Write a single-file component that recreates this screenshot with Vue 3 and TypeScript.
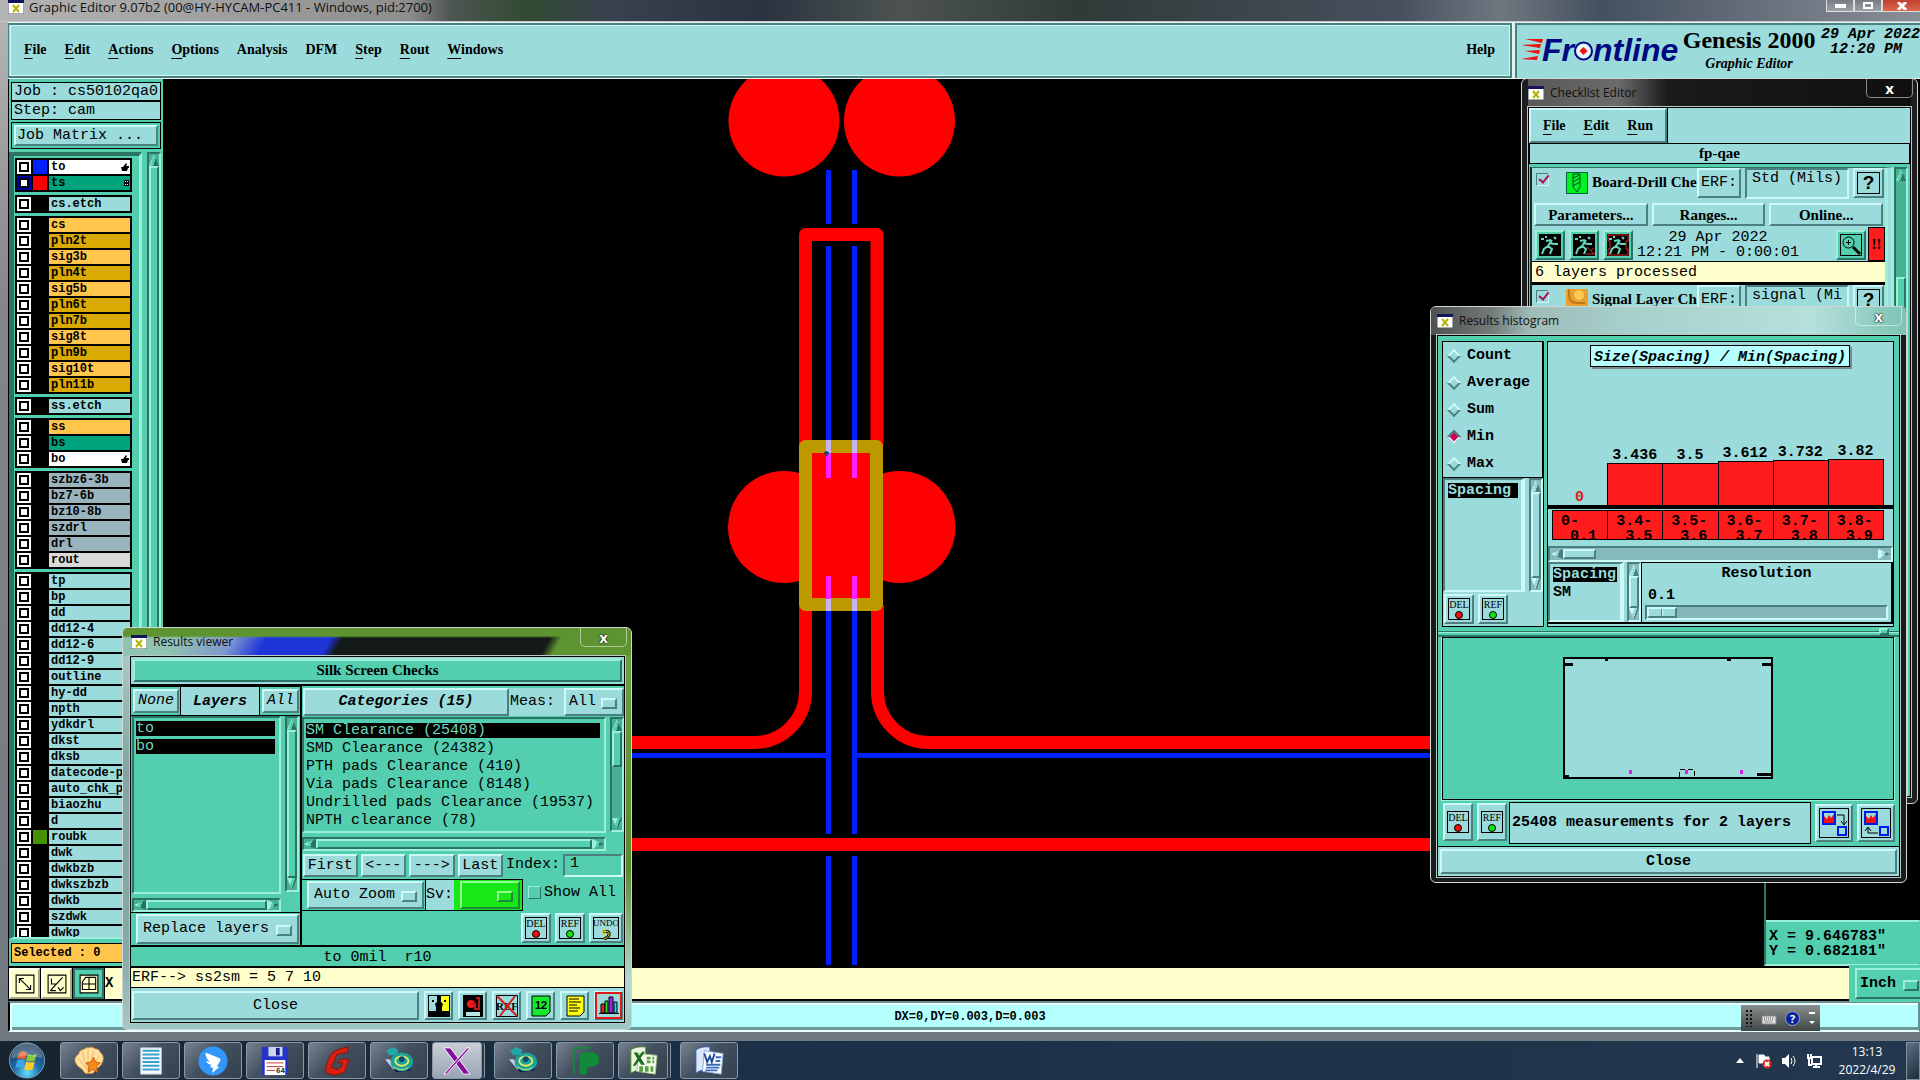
<script setup lang="ts">
import { ref } from 'vue'

interface Layer {
  name: string
  kind: string
  swatch?: string
  mark?: 'hand' | 'grid'
  active?: boolean
}

const menus = [
  ['F', 'ile'], ['E', 'dit'], ['A', 'ctions'], ['O', 'ptions'], ['', 'Analysis'],
  ['', 'DFM'], ['S', 'tep'], ['R', 'out'], ['W', 'indows'],
]

const plain = (names: string[], kind: string): Layer[] => names.map((name) => ({ name, kind }))

const groups: Layer[][] = [
  [
    { name: 'to', kind: 'silk', swatch: '#0020ff', mark: 'hand' },
    { name: 'ts', kind: 'mask', swatch: '#ff0000', mark: 'grid', active: true },
  ],
  plain(['cs.etch'], 'misc'),
  ['cs', 'pln2t', 'sig3b', 'pln4t', 'sig5b', 'pln6t', 'pln7b', 'sig8t', 'pln9b', 'sig10t', 'pln11b'].map((name) => ({
    name,
    kind: name.startsWith('pln') ? 'plane' : 'signal',
  })),
  plain(['ss.etch'], 'misc'),
  [
    { name: 'ss', kind: 'signal' },
    { name: 'bs', kind: 'mask' },
    { name: 'bo', kind: 'silk', mark: 'hand' },
  ],
  [...plain(['szbz6-3b', 'bz7-6b', 'bz10-8b', 'szdrl', 'drl'], 'drill'), { name: 'rout', kind: 'rout' }],
  [
    ...plain(
      ['tp', 'bp', 'dd', 'dd12-4', 'dd12-6', 'dd12-9', 'outline', 'hy-dd', 'npth', 'ydkdrl', 'dkst', 'dksb',
        'datecode-pt', 'auto_chk_pn', 'biaozhu', 'd'],
      'misc',
    ),
    { name: 'roubk', kind: 'misc', swatch: '#459200' },
    ...plain(['dwk', 'dwkbzb', 'dwkszbzb', 'dwkb', 'szdwk', 'dwkp'], 'misc'),
  ],
]

const categories = [
  'SM Clearance (25408)',
  'SMD Clearance (24382)',
  'PTH pads Clearance (410)',
  'Via pads Clearance (8148)',
  'Undrilled pads Clearance (19537)',
  'NPTH clearance (78)',
]
const category = ref(0)

const stats = ['Count', 'Average', 'Sum', 'Min', 'Max']
const stat = ref('Min')

const bars = [
  { value: '0', height: 0, from: '0', to: '0.1' },
  { value: '3.436', height: 42, from: '3.4', to: '3.5' },
  { value: '3.5', height: 42, from: '3.5', to: '3.6' },
  { value: '3.612', height: 44, from: '3.6', to: '3.7' },
  { value: '3.732', height: 45, from: '3.7', to: '3.8' },
  { value: '3.82', height: 46, from: '3.8', to: '3.9' },
]

const index = ref('1')
const showAll = ref(false)
const resolution = ref(0)
const drillChecked = ref(true)
const signalChecked = ref(true)
const drillErf = ref('Std (Mils)')
const signalErf = ref('signal (Mi')
</script>

<template>
  <div class="desktop">
    <section class="editor">
      <header class="titlebar">
        <svg class="xicon" viewBox="0 0 16 14"><rect width="16" height="14" fill="#fff" stroke="#555" /><rect width="16" height="3" fill="#14145a" /><path d="M5 5l6 7M11 5l-6 7" stroke="#b8b400" stroke-width="2" /></svg>
        <span>Graphic Editor 9.07b2 (00@HY-HYCAM-PC411 - Windows, pid:2700)</span>
        <div class="caption">
          <button aria-label="Minimize"><i class="min"></i></button>
          <button aria-label="Restore"><i class="max"></i></button>
          <button class="quit" aria-label="Close window"><svg width="12" height="8" viewBox="0 0 12 8"><path d="M2 0l8 8M10 0L2 8" stroke="#fff" stroke-width="3" /></svg></button>
        </div>
      </header>

      <div class="top">
        <nav class="menubar">
          <a v-for="m in menus" :key="m[1]" href="#"><u>{{ m[0] }}</u>{{ m[1] }}</a>
          <a class="help" href="#">Help</a>
        </nav>
        <div class="brand">
          <div class="logo">
            <svg width="22" height="26" viewBox="0 0 22 26" fill="#f01010"><path d="M4 2h18l-1 4zM0 8l20-1-1 4zM4 14l15-1-1 4zM0 22l17-3-1 4z" /></svg>
            <span>Fr</span>
            <svg width="19" height="22" viewBox="0 0 19 22"><circle cx="9.500" cy="12" r="8.500" fill="#e4f6fa" stroke="#000a80" stroke-width="2" /><path d="M9.500 8l4 4-4 4-4-4z" fill="#f01010" /></svg>
            <span>ntline</span>
          </div>
          <div class="product">
            <strong>Genesis 2000</strong>
            <em>Graphic Editor</em>
          </div>
          <div class="clock">29 Apr 2022<br />&nbsp;12:20 PM</div>
        </div>
      </div>

      <div class="body">
        <aside class="sidebar">
          <div class="field">Job : cs50102qa0</div>
          <div class="field">Step: cam</div>
          <div class="matrix"><button class="bevel">Job Matrix ...</button></div>
          <div class="layers">
            <div class="frame">
              <div class="list">
                <div v-for="(g, gi) in groups" :key="gi" class="group">
                  <label v-for="l in g" :key="l.name" class="layer">
                    <input type="checkbox" :class="{ active: l.active }" />
                    <i class="swatch" :style="{ background: l.swatch }"></i>
                    <span :class="['name', l.kind]">{{ l.name }}
                      <svg v-if="l.mark === 'hand'" width="8" height="8" viewBox="0 0 8 8"><path d="M0 4h2l3-4 1 1-1 2h3v2H7l-1 3H1z" /></svg>
                      <svg v-if="l.mark === 'grid'" width="5" height="6" viewBox="0 0 5 6"><path d="M0 0h5v6H0z" /><path d="M1 1h1v1H1zM3 1h1v1H3zM1 4h1v1H1zM3 4h1v1H3z" fill="#fff" /></svg>
                    </span>
                  </label>
                </div>
              </div>
            </div>
            <div class="sb v"><i class="up"></i><i class="thumb"></i></div>
          </div>
          <div class="selected">Selected : 0</div>
        </aside>

        <div class="canvas">
          <svg class="artwork" fill="none">
            <g transform="translate(-163 -79)">
              <g fill="#ff0000">
                <circle cx="784" cy="121" r="55.5" /><circle cx="899.5" cy="121" r="55.5" />
                <circle cx="784" cy="527" r="56" /><circle cx="899.5" cy="527" r="56" />
                <rect x="812" y="453" width="59" height="146" />
              </g>
              <path d="M805.5 446V234.500H877V446" stroke="#ff0000" stroke-width="13" stroke-linejoin="round" />
              <path d="M805.500 605V692A51 51 0 0 1 754 742.500H163M877.500 605V692A51 51 0 0 0 928 742.500H1500M163 844.500H1500" stroke="#ff0000" stroke-width="13" />
              <path d="M828.500 170V224M854.500 170V224M828.500 246V440M854.500 246V440M828.500 611V834M854.500 611V834M828.500 856V965M854.500 856V965M163 755.500H831M852 755.500H1500" stroke="#0020ff" stroke-width="5" />
              <rect x="805.5" y="446.5" width="71" height="158" stroke="#bd9900" stroke-width="13" stroke-linejoin="round" />
              <path d="M828.500 440V453M854.500 440V453M828.500 599V611M854.500 599V611" stroke="#c8b4ec" stroke-width="5" />
              <path d="M828.500 453V478M854.500 453V478M828.500 576V599M854.500 576V599" stroke="#ff20ff" stroke-width="5" />
              <path d="M824 453h5M826.500 451v5" stroke="#1d4a55" stroke-width="2" />
            </g>
          </svg>
          <div class="coords">X = 9.646783"<br />Y = 0.682181"</div>
        </div>
      </div>

      <div class="command">
        <button class="tool" aria-label="Snap"><svg viewBox="0 0 18 18"><path d="M1 1h16v16H1zM4 4l10 10M4 8V4h4M14 10v4h-4" /></svg></button>
        <button class="tool" aria-label="Angle"><svg viewBox="0 0 18 18"><path d="M1 1h16v16H1zM3 15L14 3M4 4v5h4M3 15h5M10 12l2 3 3-3" /></svg></button>
        <button class="tool on" aria-label="Grid"><svg viewBox="0 0 18 18"><path d="M1 1h16v16H1zM3 7l3-4h9v11H3zM9 3v11M3 9h12" /></svg></button>
        <label class="entry" for="cmd">X Y</label>
        <input id="cmd" type="text" />
        <label class="opt green unit"><select aria-label="Units"><option>Inch</option></select></label>
      </div>
      <div class="status"><span>DX=0,DY=0.003,D=0.003</span></div>
      <div class="langbar">
        <i class="grip"></i>
        <svg width="16" height="14" viewBox="0 0 16 14"><path d="M1 5h14v8H1z" fill="#ddd" stroke="#888" /><path d="M3 7h10M3 9h10M4 11h8" stroke="#666" stroke-dasharray="1 1" /><path d="M5 4c2-3 4 0 7-3" stroke="#888" fill="none" /></svg>
        <span class="q">?</span>
        <svg width="8" height="14" viewBox="0 0 8 14" fill="#fff"><path d="M1 1h6v2H1zM1 10h6l-3 3z" /></svg>
      </div>
    </section>

    <footer class="taskbar">
      <button class="orb" aria-label="Start">
        <svg viewBox="0 0 38 38">
          <defs><radialGradient id="orb" cx=".5" cy=".85" r=".8"><stop offset="0" stop-color="#5fe3ff" /><stop offset=".45" stop-color="#1f6fa8" /><stop offset="1" stop-color="#1b3350" /></radialGradient></defs>
          <circle cx="19" cy="19" r="18" fill="url(#orb)" stroke="#7da6c4" />
          <path d="M11 11q4-3 8 0l-2 7q-4-2-8 0z" fill="#f0602c" /><path d="M20 12q4 3 9 0l-2 7q-5 2-9 0z" fill="#8cc63a" /><path d="M9 19q4-2 8 0l-2 8q-4-3-8 0z" fill="#3fa4e8" /><path d="M18 20q4 2 9 0l-2 8q-5 2-9 0z" fill="#fcc82c" />
          <path d="M3 17a16 16 0 0 1 32 0q-16-6-32 0z" fill="#fff" opacity=".25" />
        </svg>
      </button>
      <button class="task" aria-label="Shell"><svg viewBox="0 0 32 32"><path d="M12 29l-3-4Q1 20 1 14q1-4 4-5 1-5 5-5 3-3 6-2 3-2 6 1 5 0 6 4 4 3 3 8-1 6-8 10l-3 4z" fill="#ffe2a0" stroke="#e8a040" /><path d="M14 26L4 12M14 26L9 6M15 26V4M16 26l5-21M18 26l9-16" stroke="#f0b860" fill="none" /><path d="M21 12l2 5 5 1-4 4 1 6-5-3-5 3 1-6-3-4 5-1z" fill="#f58a1c" stroke="#c55a10" /></svg></button>
      <button class="task" aria-label="Notes"><svg viewBox="0 0 32 32"><path d="M5 2h22v28H5z" fill="#f6fbff" stroke="#bcd" /><path d="M7 5h18M7 9h18M7 13h18M7 17h18M7 21h18M7 25h18" stroke="#3aa0c8" stroke-width="2" /></svg></button>
      <button class="task" aria-label="Messenger"><svg viewBox="0 0 32 32"><circle cx="16" cy="16" r="15.500" fill="#3296fa" /><path d="M8 7l15 6q2 1 0 4l-3 5h3l-8 7 1-6h-3l1-3q-5-1-5-4l4 1q-5-3-5-10z" fill="#fff" /></svg></button>
      <button class="task" aria-label="Commander"><svg viewBox="0 0 32 32"><path d="M2 1h28v30H2z" fill="#2434c8" /><path d="M9 1h15v10H9z" fill="#cfd6ea" /><path d="M17 2h4v8h-4z" fill="#14208a" /><path d="M5 15h22v16H5z" fill="#fff" /><path d="M7 18h18M7 22h18M7 26h9" stroke="#c03030" /><text x="17" y="29" font-size="8" font-family="Liberation Mono, monospace" fill="#222">64</text></svg></button>
      <button class="task" aria-label="CAM"><svg viewBox="0 0 32 32"><path d="M28 1l-1 6-11 2-6 14 6 2 5-3 1-4h-5l2-4h10l-5 14-9 3q-9 0-11-4 0-10 7-20l8-4z" fill="#d91f10" stroke="#8c1208" /></svg></button>
      <button class="task" aria-label="Genesis"><svg viewBox="0 0 32 32"><path d="M2 5l7-4 6 3-1 5-8 1z" fill="#21a8a4" /><path d="M1 14l12 14 15-2 2-8z" fill="#181840" /><path d="M1 14l9 11 4-2-8-9z" fill="#c8d0e8" /><ellipse cx="19" cy="17" rx="12" ry="10" fill="#17a29c" /><ellipse cx="19" cy="16" rx="7" ry="5" fill="none" stroke="#e8e860" stroke-width="2" /><path d="M10 22q8 6 16 1" fill="none" stroke="#e8e860" /><circle cx="19" cy="14" r="3" fill="#0d4a70" /></svg></button>
      <button class="task stack lit" aria-label="X server"><svg viewBox="0 0 32 32"><path d="M2 2h7l21 28h-7z" fill="#83109a" stroke="#fff" /><path d="M27 2h3L5 30H2z" fill="#83109a" stroke="#fff" /></svg></button>
      <button class="task" aria-label="Genesis"><svg viewBox="0 0 32 32"><path d="M2 5l7-4 6 3-1 5-8 1z" fill="#21a8a4" /><path d="M1 14l12 14 15-2 2-8z" fill="#181840" /><path d="M1 14l9 11 4-2-8-9z" fill="#c8d0e8" /><ellipse cx="19" cy="17" rx="12" ry="10" fill="#17a29c" /><ellipse cx="19" cy="16" rx="7" ry="5" fill="none" stroke="#e8e860" stroke-width="2" /><path d="M10 22q8 6 16 1" fill="none" stroke="#e8e860" /><circle cx="19" cy="14" r="3" fill="#0d4a70" /></svg></button>
      <button class="task" aria-label="Planner"><svg viewBox="0 0 32 32"><path d="M4 30V2h18" stroke="#128a38" stroke-width="2" fill="none" /><path d="M10 30V12q0-6 8-6h5q8 2 8 8 0 8-9 8h-4v8z" fill="#128a38" /></svg></button>
      <button class="task stack" aria-label="Excel"><svg viewBox="0 0 32 32"><path d="M3 4q6-4 16-3v25q-8-2-16 3z" fill="#e8f4dc" stroke="#3a8a28" /><path d="M12 8l19 2-2 20-20-3z" fill="#f6fbf0" stroke="#9ac080" /><path d="M20 13h8M20 17h8M12 23h15M12 26h15" stroke="#58a03c" stroke-width="3" stroke-dasharray="4 2" /><path d="M6 7h4l8 13h-4zM15 6h3L8 21H5z" fill="#1b6c1b" /></svg></button>
      <button class="task" aria-label="Word"><svg viewBox="0 0 32 32"><path d="M2 4q6-4 15-3v25q-8-2-15 3z" fill="#dce8f8" stroke="#2a5cae" /><path d="M11 5l20 3-2 22-20-3z" fill="#fafcff" stroke="#8aa8d8" /><path d="M23 12h6M23 16h5M13 20h15M13 23h14M12 26h13" stroke="#3c6cba" stroke-width="2" /><path d="M11 8l3 9 3-6 2 6 3-9" fill="none" stroke="#1c4a9c" stroke-width="2" /></svg></button>
      <div class="tray">
        <svg width="8" height="5" viewBox="0 0 8 5"><path d="M4 0l4 5H0z" fill="#fff" /></svg>
        <svg class="flag" width="16" height="16" viewBox="0 0 16 16"><path d="M1 1v14M3 2h5l1 2h4v6H3z" fill="#fff" stroke="#fff" /><circle cx="11" cy="11" r="4.500" fill="#e02818" /><path d="M9 9l4 4M13 9l-4 4" stroke="#fff" stroke-width="2" /></svg>
        <svg width="16" height="16" viewBox="0 0 16 16"><path d="M1 5h3l4-4v14l-4-4H1z" fill="#fff" /><path d="M10 5q2 3 0 6M12 3q4 5 0 10" fill="none" stroke="#fff" /></svg>
        <svg width="16" height="16" viewBox="0 0 16 16"><path d="M6 4h9v7H6zM10 11v3M7 14h7M2 1v4h3V1M3 5v7h3" fill="none" stroke="#fff" stroke-width="2" /></svg>
        <div class="time">13:13<br />2022/4/29</div>
        <button class="peek" aria-label="Show desktop"></button>
      </div>
    </footer>

    <!-- Checklist -->
    <section class="win checklist">
      <header>
        <svg class="xicon" viewBox="0 0 16 14"><rect width="16" height="14" fill="#fff" stroke="#555" /><rect width="16" height="3" fill="#14145a" /><path d="M5 5l6 7M11 5l-6 7" stroke="#b8b400" stroke-width="2" /></svg>
        <span>Checklist Editor</span><button class="x" aria-label="Close window">x</button>
      </header>
      <div class="pane">
        <div class="cmenu"><nav class="bevel"><a href="#"><u>F</u>ile</a><a href="#"><u>E</u>dit</a><a href="#"><u>R</u>un</a></nav></div>
        <h2>fp-qae</h2>
        <div class="crow">
          <div class="items">
            <article>
              <div class="chead">
                <input v-model="drillChecked" type="checkbox" aria-label="Board-Drill Checks" />
                <svg width="22" height="22" viewBox="0 0 22 22"><rect x=".5" y=".5" width="21" height="21" fill="#00f420" stroke="#063" /><path d="M7 2h7v13l-3 5-4-5zM7 6l7-3M7 10l7-4M7 14l7-4" fill="none" stroke="#043" /></svg>
                <span class="cname">Board-Drill Che</span>
                <button class="bevel erf">ERF:</button>
                <input v-model="drillErf" class="sunk" type="text" aria-label="ERF model" />
                <button class="bevel qm"><b>?</b></button>
              </div>
              <div class="cbtns"><button class="bevel">Parameters...</button><button class="bevel">Ranges...</button><button class="bevel">Online...</button></div>
              <div class="crun">
                <button v-for="n in 3" :key="n" class="bevel green run" aria-label="Run">
                  <svg viewBox="0 0 22 22"><rect width="22" height="22" fill="#000" /><path d="M15 3l2 2M13 6l-4 6 4 3-2 5M10 9l5 1 4 0M9 12l-4 3-2 5M12 6L7 7M2 5h3M6 3h2" stroke="#66d8bc" stroke-width="2" fill="none" /><path v-if="n === 2" d="M14 13l7 7M21 14l-4 3M13 20h9" stroke="#e02020" /><path v-if="n === 3" d="M1 1h20v6h-2v8h2v6H1v-6h2V7H1z" stroke="#e02020" fill="none" /></svg>
                </button>
                <p>29 Apr 2022<br />12:21 PM - 0:00:01</p>
                <button class="bevel green run view" aria-label="Results"><svg viewBox="0 0 22 22" fill="none" stroke="#000"><rect x=".5" y=".5" width="21" height="21" /><circle cx="8.500" cy="8.500" r="5.500" /><path d="M6 8.500h5M8.500 6v5" /><path d="M13 13l7 7" stroke-width="3" /></svg></button>
                <span class="alert">!!</span>
              </div>
              <div class="cmsg">6 layers processed</div>
            </article>
            <article>
              <div class="chead">
                <input v-model="signalChecked" type="checkbox" aria-label="Signal Layer Checks" />
                <svg width="22" height="22" viewBox="0 0 22 22"><rect width="22" height="22" fill="#e8a030" /><path d="M3 0v6q0 8 8 8h8M9 6h4" stroke="#c07818" stroke-width="2" fill="none" /><circle cx="13" cy="6" r="5" fill="#ffc850" /></svg>
                <span class="cname">Signal Layer Ch</span>
                <button class="bevel erf">ERF:</button>
                <input v-model="signalErf" class="sunk" type="text" aria-label="ERF model" />
                <button class="bevel qm"><b>?</b></button>
              </div>
            </article>
          </div>
          <div class="sb v green"><i class="up"></i><i class="gap"></i><i class="thumb"></i></div>
        </div>
      </div>
    </section>

    <!-- Histogram -->
    <section class="win histogram">
      <header>
        <svg class="xicon" viewBox="0 0 16 14"><rect width="16" height="14" fill="#fff" stroke="#555" /><rect width="16" height="3" fill="#14145a" /><path d="M5 5l6 7M11 5l-6 7" stroke="#b8b400" stroke-width="2" /></svg>
        <span>Results histogram</span><button class="x" aria-label="Close window">x</button>
      </header>
      <div class="pane green">
        <div class="hmain">
          <div class="hleft">
            <div class="radios">
              <label v-for="s in stats" :key="s"><input v-model="stat" type="radio" name="stat" :value="s" />{{ s }}</label>
            </div>
            <div class="hlist">
              <ul class="sunk"><li class="sel">Spacing</li></ul>
              <div class="sb v"><i class="up"></i><i class="thumb"></i><i class="dn"></i></div>
            </div>
            <div class="mini"><button class="bevel tag red"><span>DEL<i></i></span></button><button class="bevel tag lime"><span>REF<i></i></span></button></div>
          </div>
          <div class="hright">
            <div class="chart">
              <h3>Size(Spacing) / Min(Spacing)</h3>
              <div class="bars">
                <div v-for="b in bars" :key="b.from" class="col">
                  <span :class="{ zero: !b.height }">{{ b.value }}</span>
                  <i v-if="b.height" :style="{ height: b.height + 'px' }"></i>
                </div>
              </div>
              <div class="bins"><div v-for="b in bars" :key="b.from"><span>{{ b.from }}-</span><em>{{ b.to }}</em></div></div>
            </div>
            <div class="sb h hs"><i class="lt"></i><i class="thumb"></i><i class="space"></i><i class="rt"></i></div>
            <div class="hsub">
              <ul class="sunk"><li class="sel">Spacing</li><li>SM</li></ul>
              <div class="sb v"><i class="up"></i><i class="thumb"></i><i class="dn"></i></div>
              <label class="res"><span>Resolution</span><b>0.1</b><input v-model="resolution" type="range" min="0" max="10" /></label>
            </div>
          </div>
        </div>
        <div class="sash"><i></i></div>
        <div class="board">
          <svg width="210" height="122" viewBox="0 0 210 122"><rect x="1" y="1" width="208" height="120" fill="#9bdbdb" stroke="#000" stroke-width="2" /><path d="M0 6h10v3H0zM199 6h11v3h-11zM42 1h3v3h-3zM164 1h4v3h-4zM0 118h6v4H0zM194 116h16v3h-16z" /><path d="M116.500 120v-7.500h15v8" fill="none" stroke="#000" stroke-dasharray="5 3" /><path d="M66 113h3v4h-3zM122 113h3v4h-3zM177 113h3v4h-3z" fill="#d820e8" /></svg>
        </div>
        <div class="hfoot">
          <button class="bevel tag red"><span>DEL<i></i></span></button>
          <button class="bevel tag lime"><span>REF<i></i></span></button>
          <div class="measure">25408 measurements for 2 layers</div>
          <button class="bevel pic" aria-label="Next layer"><svg viewBox="0 0 30 30"><path d="M.5.500h29v29H.5z" fill="none" stroke="#000" /><path d="M4 4h12v12H4zM19 19h8v8h-8z" fill="none" stroke="#0018e8" stroke-width="2" /><path d="M5 15V8l3 3 2-4 2 3 3-4v9z" fill="#f01010" /><path d="M18 7h7v9M22 13l3 4 3-4" fill="none" stroke="#000" /></svg></button>
          <button class="bevel pic" aria-label="Previous layer"><svg viewBox="0 0 30 30"><path d="M.5.500h29v29H.5z" fill="none" stroke="#000" /><path d="M4 4h12v12H4zM19 19h8v8h-8z" fill="none" stroke="#0018e8" stroke-width="2" /><path d="M5 15V8l3 3 2-4 2 3 3-4v9z" fill="#f01010" /><path d="M17 25H7v-5M4 23l3-4 3 4" fill="none" stroke="#000" /></svg></button>
        </div>
        <div class="hclose"><button class="bevel">Close</button></div>
      </div>
    </section>

    <!-- Results viewer -->
    <section class="win viewer">
      <header>
        <svg class="xicon" viewBox="0 0 16 14"><rect width="16" height="14" fill="#fff" stroke="#555" /><rect width="16" height="3" fill="#14145a" /><path d="M5 5l6 7M11 5l-6 7" stroke="#b8b400" stroke-width="2" /></svg>
        <span>Results viewer</span><button class="x" aria-label="Close window">x</button>
      </header>
      <div class="pane">
        <div class="vtitle"><h2 class="bevel green">Silk Screen Checks</h2></div>
        <div class="vmain">
          <div class="vleft">
            <div class="vtabs">
              <div><button class="bevel">None</button></div>
              <strong>Layers</strong>
              <div><button class="bevel">All</button></div>
            </div>
            <div class="vlist">
              <div class="grow">
                <ul class="sunk"><li class="sel">to</li><li class="sel">bo</li></ul>
                <div class="sb h"><i class="lt"></i><i class="thumb"></i><i class="rt"></i></div>
              </div>
              <div class="sb v"><i class="up"></i><i class="thumb"></i><i class="dn"></i></div>
            </div>
            <div class="replace"><label class="opt"><select aria-label="Layer mode"><option>Replace layers</option></select></label></div>
          </div>
          <div class="vright">
            <div class="vcat">
              <button class="bevel">Categories (15)</button>
              <span>Meas:</span>
              <label class="opt"><select aria-label="Measurements"><option>All</option></select></label>
            </div>
            <div class="clist">
              <div class="grow">
                <ul class="sunk"><li v-for="(c, i) in categories" :key="c" :class="{ sel: i === category }" @click="category = i">{{ c }}</li></ul>
                <div class="sb h"><i class="lt"></i><i class="thumb"></i><i class="rt"></i></div>
              </div>
              <div class="sb v"><i class="up"></i><i class="thumb"></i><i class="space"></i><i class="dn"></i></div>
            </div>
            <div class="vnav">
              <button class="bevel">First</button><button class="bevel">&lt;---</button><button class="bevel">---&gt;</button><button class="bevel">Last</button>
              <label for="idx">Index:</label><input id="idx" v-model="index" class="sunk" type="text" />
            </div>
            <div class="vopt">
              <div class="zoom"><label class="opt"><select aria-label="Zoom mode"><option>Auto Zoom</option></select></label></div>
              <div class="sv"><span>Sv:</span><div><label class="opt lime"><select aria-label="Severity"><option></option></select></label></div></div>
              <label class="all"><input v-model="showAll" type="checkbox" />Show All</label>
            </div>
            <div class="vtags">
              <button class="bevel tag red"><span>DEL<i></i></span></button>
              <button class="bevel tag lime"><span>REF<i></i></span></button>
              <button class="bevel tag undo"><span>UNDO<svg width="12" height="12" viewBox="0 0 12 12"><path d="M3 4q7-2 6 3-1 3-5 4" fill="none" stroke="#000" stroke-width="3" /><path d="M3 4q7-2 6 3-1 3-5 4M1 4l4-3v6z" fill="none" stroke="#f0e020" stroke-width="1" /></svg></span></button>
            </div>
          </div>
        </div>
        <div class="vinfo">to 0mil&nbsp; r10</div>
        <div class="verf">ERF--&gt; ss2sm = 5 7 10</div>
        <div class="vfoot">
          <button class="bevel vclose">Close</button>
          <button class="bevel act" aria-label="Compare"><svg viewBox="0 0 22 22"><path d="M0 0h22v22H0z" /><path d="M1 1h8v6l-2 2 1 3v4H1z" fill="#9bdbdb" /><path d="M21 1h-8v6l2 2-1 3v4h7z" fill="#ffff10" /><path d="M4 5h2v2H4zM16 5h2v2h-2z" /></svg></button>
          <button class="bevel act" aria-label="Mark"><svg viewBox="0 0 22 22"><path d="M1 0h20v22H1z" /><path d="M4 17h14v4H4z" fill="#b8e8e8" /><circle cx="9" cy="9" r="4" fill="#f01818" /><path d="M14 3h3v11h-4V9h-4" stroke="#c01818" fill="none" stroke-width="2" /></svg></button>
          <button class="bevel act" aria-label="Clear reference"><svg viewBox="0 0 22 22"><path d="M.5.500h21v21H.5z" fill="none" stroke="#000" /><text x="0" y="15" font-family="Liberation Serif, serif" font-size="11">REF</text><path d="M1 1l20 20M19 1L4 21" stroke="#d02020" stroke-width="2" /></svg></button>
          <button class="bevel act" aria-label="Number"><svg viewBox="0 0 22 22"><path d="M2 1h18v16l-4 4H2z" fill="#18e830" stroke="#000" /><text x="5" y="14" font-family="Liberation Sans, sans-serif" font-weight="bold" font-size="11">12</text></svg></button>
          <button class="bevel act" aria-label="Report"><svg viewBox="0 0 22 22"><path d="M3 1h17v16l-4 4H3z" fill="#ffff10" stroke="#000" /><path d="M5 4h10M5 7h12M5 10h8M5 13h11M5 16h9" stroke="#000" /></svg></button>
          <button class="bevel act on" aria-label="Histogram"><svg viewBox="0 0 22 22" stroke="#000"><path d="M3 9h4v9H3z" fill="#e82020" /><path d="M7 6h3v12H7z" fill="#20e030" /><path d="M11 2h4v16h-4z" fill="#a020f0" /><path d="M16 7h3v11h-3z" fill="#20d8e8" /><path d="M1 18.500h20" /></svg></button>
        </div>
      </div>
    </section>
  </div>
</template>

<style>
html,
body {
  margin: 0;
  background: #000;
}
</style>

<style scoped>
.desktop,
.desktop * {
  box-sizing: border-box;
}
.desktop {
  --face: #9bdbdb;
  --light: #cdfaf8;
  --dark: #4c7f80;
  --mono: 'Liberation Mono', 'Courier New', monospace;
  --serif: 'Liberation Serif', 'Times New Roman', serif;
  --ui: 'Open Sans', 'Noto Sans', sans-serif;
  --teal: #53cfaf;
  --teal-light: #9cf0da;
  --teal-dark: #2b7362;
  position: relative;
  display: flex;
  flex-direction: column;
  height: 100vh;
  overflow: hidden;
  background: #000;
  color: #000;
  font: bold 15px/18px var(--mono);
  white-space: nowrap;
}
button,
input,
select {
  margin: 0;
  padding: 0;
  border: 0;
  border-radius: 0;
  background: none;
  color: inherit;
  font: inherit;
  appearance: none;
  outline: none;
}
ul, h2, h3, p {
  margin: 0;
  padding: 0;
  list-style: none;
  font: inherit;
}
a {
  color: inherit;
  text-decoration: none;
}
u {
  text-underline-offset: 4px;
}
svg {
  display: block;
  flex: none;
}
.bevel,
.opt {
  background: var(--face);
  border: 2px solid;
  border-color: var(--light) var(--dark) var(--dark) var(--light);
}
.sunk {
  border: 2px solid;
  border-color: var(--dark) var(--light) var(--light) var(--dark);
}
.green {
  --face: var(--teal);
  --light: var(--teal-light);
  --dark: var(--teal-dark);
}
.opt {
  position: relative;
  display: flex;
}
.opt select {
  flex: 1;
  width: 100%;
  padding: 0 0 0 5px;
}
.opt::after {
  content: '';
  position: absolute;
  right: 5px;
  top: calc(50% - 4px);
  width: 12px;
  height: 7px;
  border: 2px solid;
  border-color: var(--light) var(--dark) var(--dark) var(--light);
  pointer-events: none;
}

/* scroll bars */
.sb {
  display: flex;
  flex: none;
  background: color-mix(in srgb, var(--face) 85%, #000);
  border: 2px solid;
  border-color: var(--dark) var(--light) var(--light) var(--dark);
}
.sb.v {
  flex-direction: column;
  width: 14px;
}
.sb.h {
  height: 14px;
}
.sb .thumb {
  flex: 1;
  background: var(--face);
  border: 2px solid;
  border-color: var(--light) var(--dark) var(--dark) var(--light);
}
.sb .space {
  flex: 1;
}
.sb .gap {
  height: 96px;
}
.up, .dn, .lt, .rt {
  flex: none;
  width: 10px;
  height: 12px;
  background: linear-gradient(110deg, var(--light) 38%, var(--face) 38% 58%, var(--dark) 58%);
  clip-path: polygon(50% 0, 100% 100%, 0 100%);
}
.dn {
  clip-path: polygon(0 0, 100% 0, 50% 100%);
}
.lt, .rt {
  width: 12px;
  height: 10px;
}
.lt {
  clip-path: polygon(0 50%, 100% 0, 100% 100%);
}
.rt {
  clip-path: polygon(0 0, 100% 50%, 0 100%);
}

/* main window */
.editor {
  position: relative;
  flex: 1;
  min-height: 0;
  display: flex;
  flex-direction: column;
  padding: 0 0 8px 8px;
  background: linear-gradient(#b8b8b8 0, #85858a 300px, #707880 100%);
}
.titlebar {
  display: flex;
  align-items: center;
  gap: 5px;
  height: 22px;
  margin-left: -8px;
  padding: 0 0 7px 8px;
  font: 13px/14px var(--ui);
  color: #111;
  background: linear-gradient(90deg, #b4b4b4 0, #8d8d8d 410px, #4e5552 450px, #304a30 530px, #39424e 600px, #2b3240 760px, #4c5350 900px, #303a38 1080px, #47505e 1400px, #6f7880 1500px, #44505f 1600px, #8a8f98 100%);
  border-bottom: 1px solid #c8c8c8;
}
.xicon {
  width: 16px;
  height: 14px;
}
.caption {
  display: flex;
  align-self: flex-start;
  margin-left: auto;
}
.caption button {
  display: grid;
  place-items: center;
  width: 28px;
  height: 12px;
  border: 1px solid #ddd;
  border-top: 0;
  background: linear-gradient(#777c84, #9da2a8);
}
.caption .quit {
  width: 39px;
  margin-right: -1px;
  background: linear-gradient(#c0402c, #d86a50);
}
.min {
  width: 11px;
  height: 4px;
  background: #fff;
}
.max {
  width: 10px;
  height: 7px;
  border: 2px solid #fff;
}
.top {
  display: flex;
  flex: none;
  height: 57px;
  padding: 1px 0;
  background: #e0f4f2;
}
.menubar {
  flex: 1;
  display: flex;
  align-items: center;
  gap: 18px;
  padding: 0 14px 1px 15px;
  background: #9bdbdb;
  border: 2px solid;
  border-color: #4c7f80;
  border-width: 2px 3px 2px 1px;
  outline: 1px solid #cdfaf8;
  outline-offset: -3px;
  font: bold 14px/18px var(--serif);
}
.menubar .help {
  margin-left: auto;
}
.brand {
  display: flex;
  width: 405px;
  margin-left: 3px;
  background: #9bdbdb;
  border: solid #4c7f80;
  border-width: 2px 0 0 2px;
  overflow: hidden;
}
.logo {
  display: flex;
  align-items: center;
  width: 169px;
  padding: 0 0 4px 4px;
  font: italic bold 32px/36px 'Liberation Sans', Arial, sans-serif;
  color: #000a80;
}
.logo svg:first-child {
  margin-right: -1px;
}
.product {
  display: flex;
  flex-direction: column;
  align-items: center;
  width: 137px;
  font: italic bold 14px/18px var(--serif);
}
.product strong {
  font: bold 24px/30px var(--serif);
}
.clock {
  padding: 2px 0 0 5px;
  font: italic bold 15px/15px var(--mono);
}
.body {
  flex: 1;
  min-height: 0;
  display: flex;
}
.sidebar {
  --face: #9bdbdb;
  display: flex;
  flex-direction: column;
  width: 155px;
  padding: 3px 2px 0 3px;
  background: var(--teal);
  border-left: 1px solid #000;
  font-weight: normal;
}
.field {
  flex: none;
  height: 19px;
  padding-left: 2px;
  margin-left: -1px;
  background: #9bdbdb;
  border: 1px solid #000;
  line-height: 17px;
}
.matrix {
  flex: none;
  display: flex;
  height: 27px;
  margin: 2px 0 3px -1px;
  padding: 2px;
  border: 1px solid #000;
}
.matrix button {
  flex: 1;
  padding-left: 1px;
  text-align: left;
}
.layers {
  --face: var(--teal);
  --light: var(--teal-light);
  --dark: var(--teal-dark);
  flex: 1;
  min-height: 0;
  display: flex;
  justify-content: space-between;
  margin-left: -3px;
}
.frame {
  width: 133px;
  padding: 2px 7px 0 1px;
  border: solid;
  border-width: 4px 3px 2px 5px;
  border-color: var(--dark) var(--light) var(--light) var(--dark);
  overflow: hidden;
}
.list {
  display: flex;
  flex-direction: column;
  gap: 3px;
  height: 100%;
  overflow: hidden;
}
.group {
  flex: none;
  display: flex;
  flex-direction: column;
  gap: 2px;
  padding: 2px;
  background: #000;
}
.layer {
  display: flex;
  gap: 2px;
  height: 14px;
}
.layer input {
  width: 14px;
  height: 14px;
  border: 2px solid #fff;
  background: #fff;
  box-shadow: inset 0 0 0 2px #000;
}
.layer input.active {
  border-color: #0000a8;
}
.swatch {
  width: 14px;
}
.name {
  flex: 1;
  display: flex;
  align-items: center;
  justify-content: space-between;
  width: 0;
  padding: 0 1px 0 2px;
  overflow: hidden;
  font: bold 12px/14px var(--mono);
}
.silk { background: #fff; }
.mask { background: #00a47c; }
.misc { background: #9bdbdb; }
.plane { background: #dbaa00; }
.signal { background: #ffc64b; }
.drill { background: #9bb3bd; }
.rout { background: #dadada; }
.selected {
  flex: none;
  height: 20px;
  margin: 4px 0 3px -1px;
  padding-left: 2px;
  background: #ffc64b;
  border: 1px solid #000;
  font: bold 12px/18px var(--mono);
}
.canvas {
  position: relative;
  flex: 1;
  overflow: hidden;
  background: #000;
}
.artwork {
  width: 100%;
  height: 100%;
}
.coords {
  position: absolute;
  right: 0;
  bottom: 0;
  width: 156px;
  height: 46px;
  padding: 7px 3px;
  background: var(--teal);
  border: 2px solid;
  border-color: #9cf0da #53cfaf #9cf0da #2b7362;
  line-height: 15px;
}
.coords::before {
  content: '';
  position: absolute;
  left: -2px;
  bottom: 100%;
  width: 2px;
  height: 40px;
  background: #2b7362;
}
.command {
  display: flex;
  flex: none;
  height: 35px;
  padding: 2px 0 2px 1px;
  background: #000;
}
.tool {
  display: grid;
  place-items: center;
  width: 31px;
  margin-right: 1px;
  background: #ffffcc;
  border: 2px solid;
  border-color: #fffff0 #a8a880 #a8a880 #fffff0;
}
.tool.on {
  background: var(--teal);
  border-color: #2b7362;
}
.tool svg {
  width: 20px;
  height: 20px;
  fill: #ffffcc;
  stroke: #000;
}
.entry {
  padding: 6px 4px 0 0;
  background: #ffffcc;
  font-size: 14px;
}
.command input {
  flex: 1;
  background: #ffffcc;
}
.unit {
  width: 71px;
  margin: 0 -6px 0 5px;
  box-shadow: -3px 0 0 3px var(--teal);
}
.unit select {
  padding-left: 3px;
}
.status {
  flex: none;
  height: 31px;
  padding: 0 0 0 12px;
  background: #b6ffff;
  border: 2px solid;
  border-color: #688f90 #688f90 #e8ffff #000;
  box-shadow: inset 3px 3px 0 -1px #eaffff, inset 0 -3px 0 #6b9a9b;
  font: bold 12px/28px var(--mono);
  text-align: center;
}
.langbar {
  position: absolute;
  right: 100px;
  bottom: 9px;
  display: flex;
  align-items: center;
  gap: 8px;
  width: 79px;
  height: 26px;
  padding-left: 4px;
  background: linear-gradient(#8a8f90, #3f4444);
}
.grip {
  width: 8px;
  height: 18px;
  background: radial-gradient(#111 1px, transparent 1px) 0 0 / 4px 4px;
}
.q {
  width: 15px;
  height: 15px;
  border: 1px solid #9ab;
  border-radius: 50%;
  background: #0a22a0;
  color: #fff;
  font: bold 11px/13px var(--ui);
  text-align: center;
}

/* task bar */
.taskbar {
  display: flex;
  flex: none;
  align-items: stretch;
  gap: 4px;
  height: 40px;
  padding: 1px 0 1px 8px;
  background: linear-gradient(90deg, #16242f, #1c3048 40%, #1f3349 75%, #23384f);
  border-top: 1px solid #6e7a84;
}
.orb {
  width: 38px;
  margin-right: 10px;
}
.orb svg {
  width: 38px;
  height: 37px;
}
.task {
  display: grid;
  place-items: center;
  width: 58px;
  border: 1px solid #8a98a8;
  border-radius: 3px;
  background: linear-gradient(135deg, #76828f, #43505f 45%, #33414f);
}
.task svg {
  width: 30px;
  height: 30px;
}
.task.stack {
  width: 50px;
  margin-right: 8px;
  box-shadow: 3px 0 0 -1px #2a3644, 4px 0 0 -1px #8a98a8;
}
.task.lit {
  background: linear-gradient(#c9ced6, #9aa4b2);
}
.tray {
  display: flex;
  align-items: center;
  gap: 9px;
  margin-left: auto;
  color: #fff;
  font: 12px/18px var(--ui);
}
.tray .flag {
  margin-left: 3px;
}
.tray .time {
  width: 72px;
  margin-right: -6px;
  text-align: center;
}
.peek {
  width: 14px;
  height: 38px;
  border: 1px solid #8090a0;
  background: linear-gradient(135deg, #607080, #1c2a3a);
}

/* floating windows */
.win {
  position: absolute;
  display: flex;
  flex-direction: column;
  padding: 0 6px 6px;
  border: 1px solid #cfd6d4;
  border-radius: 6px;
}
.win header {
  flex: none;
  display: flex;
  align-items: center;
  gap: 6px;
  height: 28px;
  color: #101010;
  font: 12px/16px var(--ui);
}
.win .x {
  align-self: flex-start;
  width: 47px;
  height: 19px;
  margin-right: -2px;
  margin-left: auto;
  border: 1px solid #ffffff80;
  border-top: 0;
  border-radius: 0 0 5px 5px;
  color: #fff;
  font: bold 15px/14px var(--ui);
  text-shadow: 0 0 2px #000, 0 0 1px #000;
}
.pane {
  flex: 1;
  min-height: 0;
  display: flex;
  flex-direction: column;
  border: 1px solid #000;
  outline: 1px solid #b8c8c4;
  background: #9bdbdb;
}
.pane.green {
  --face: #9bdbdb;
  --light: #cdfaf8;
  --dark: #4c7f80;
  background: var(--teal);
}

.checklist {
  top: 78px;
  right: 2px;
  width: 397px;
  height: 726px;
  background: #1b1d1e;
}
.checklist header {
  background: linear-gradient(90deg, #585858, #6c6c6c 90px, #1a1a1a 140px, #101010);
}
.cmenu nav {
  display: flex;
  align-items: center;
  gap: 18px;
  width: 138px;
  height: 35px;
  padding: 0 12px;
  outline: 1px solid #000;
  font: bold 14px/18px var(--serif);
}
.checklist h2 {
  height: 21px;
  border: 1px solid #000;
  font: bold 15px/19px var(--serif);
  text-align: center;
}
.crow {
  flex: 1;
  display: flex;
  padding: 3px 2px 0 1px;
  background: var(--teal);
}
.items {
  flex: 1;
  min-width: 0;
  border: solid;
  border-width: 1px 9px 0 2px;
  border-color: var(--teal-dark) var(--teal-light) #000 #0c2c24;
  border-right-style: double;
  background: #9bdbdb;
}
.items article {
  border-bottom: 3px solid #000;
}
.chead {
  display: flex;
  gap: 4px;
  height: 34px;
  align-items: flex-start;
  padding: 0 1px 0 4px;
}
.chead input[type='checkbox'] {
  width: 13px;
  height: 13px;
  margin: 5px 13px 0 0;
  border: 1px solid;
  border-color: #4c7f80 #cdfaf8 #cdfaf8 #4c7f80;
}
.chead input:checked::before {
  content: '';
  display: block;
  width: 4px;
  height: 8px;
  margin: -1px 0 0 4px;
  border: solid #b01050;
  border-width: 0 2px 2px 0;
  transform: rotate(40deg);
}
.chead svg {
  margin-top: 4px;
}
.cname {
  flex: 1;
  width: 0;
  margin-right: -4px;
  overflow: hidden;
  font: bold 15px/29px var(--serif);
}
.erf {
  width: 44px;
  height: 30px;
  font-weight: normal;
}
.chead input[type='text'] {
  width: 104px;
  height: 31px;
  padding: 0 0 10px 5px;
  font-weight: normal;
}
.qm {
  width: 31px;
  height: 30px;
  padding: 2px;
}
.qm b {
  display: block;
  border: 1px solid #000;
  font: bold 19px/20px 'Liberation Sans', sans-serif;
}
.cbtns {
  display: flex;
  gap: 4px;
  padding: 1px 2px;
}
.cbtns button {
  flex: 1;
  height: 23px;
  font: bold 15px/18px var(--serif);
}
.crun {
  display: flex;
  gap: 4px;
  height: 34px;
  padding: 3px 0 0 3px;
}
.run {
  width: 30px;
  height: 30px;
  padding: 2px;
}
.crun p {
  font: 15px/15px var(--mono);
  text-align: center;
}
.crun .view {
  margin-left: auto;
}
.alert {
  width: 17px;
  margin: -3px 0 0 -2px;
  border: 1px solid #000;
  background: #ff1c1c;
  font: bold 15px/32px var(--serif);
  text-align: center;
}
.cmsg {
  height: 21px;
  padding-left: 3px;
  border-top: 1px solid #000;
  background: #ffffcc;
  font-weight: normal;
  line-height: 21px;
}

.histogram {
  top: 306px;
  right: 13px;
  width: 477px;
  padding-bottom: 5px;
  background: #171b1c;
}
.histogram header {
  background: linear-gradient(90deg, #4e5252, #747a78 60px, #9fbcb8 100px, #a6d0cc 200px, #b6e0dc 380px, #7cc4b4);
  margin: 0 -6px;
  padding: 0 6px;
  border-radius: 5px 5px 0 0;
}
.hmain {
  display: flex;
  gap: 3px;
  padding: 5px 5px 0 4px;
}
.hleft {
  display: flex;
  flex-direction: column;
  width: 102px;
  border: 1px solid #000;
  background: #9bdbdb;
}
.radios {
  display: flex;
  flex-direction: column;
  border-bottom: 1px solid #000;
  border-right: 1px solid #000;
}
.radios label {
  display: flex;
  align-items: center;
  gap: 8px;
  height: 27px;
  padding-left: 6px;
}
.radios input {
  width: 10px;
  height: 10px;
  border: 2px solid;
  border-color: var(--light) var(--dark) var(--dark) var(--light);
  transform: rotate(45deg);
}
.radios input:checked {
  border-color: var(--dark) var(--light) var(--light) var(--dark);
  background: #d00058;
}
.hlist {
  display: flex;
  justify-content: space-between;
  height: 114px;
}
.hlist ul {
  width: 82px;
  padding: 3px;
  border-right-width: 4px;
}
.sel {
  background: #000;
  color: #9bdbdb;
}
.hlist li,
.hsub li {
  height: 15px;
  margin-bottom: 3px;
  line-height: 15px;
}
.mini {
  display: flex;
  gap: 4px;
  padding: 2px 1px;
}
.tag {
  width: 30px;
  height: 30px;
  padding: 2px;
}
.tag span {
  display: flex;
  flex-direction: column;
  align-items: center;
  height: 22px;
  border: 1px solid #000;
  font: 10px/12px var(--serif);
}
.tag i {
  width: 8px;
  height: 8px;
  border: 1px solid #000;
  border-radius: 50%;
  background: #f01010;
}
.tag.lime i {
  background: #10e810;
}
.tag.undo {
  width: 34px;
}
.tag.undo span {
  font-size: 9px;
  line-height: 10px;
}
.hright {
  flex: 1;
  display: flex;
  flex-direction: column;
  border: 1px solid #000;
  background: #9bdbdb;
}
.chart {
  display: flex;
  flex-direction: column;
  padding: 3px 5px 6px 4px;
}
.chart h3 {
  align-self: center;
  height: 22px;
  padding: 0 3px;
  border: 1px solid #000;
  background: #b6ffff;
  box-shadow: 2px 2px 0 #7c8a8c;
  font-style: italic;
  line-height: 24px;
}
.bars {
  display: flex;
  align-items: flex-end;
  height: 142px;
  margin: 0 -5px 0 -4px;
  padding: 0 10px 0 4px;
  border-bottom: 4px solid #000;
}
.col {
  flex: 1;
  display: flex;
  flex-direction: column;
  align-items: center;
  line-height: 14px;
}
.col i {
  align-self: stretch;
  margin-right: -1px;
  border: 1px solid #000;
  border-bottom: 0;
  background: #ff1c1c;
}
.zero {
  color: #e01818;
}
.bins {
  display: flex;
  height: 30px;
  margin: 1px 4px 0 0;
  background: #ff1c1c;
  border: 1px solid #000;
  overflow: hidden;
}
.bins div {
  flex: 1;
  padding: 3px 8px 0;
  line-height: 15px;
}
.bins div + div {
  border-left: 1px solid #000;
}
.bins span,
.bins em {
  display: block;
  font-style: normal;
}
.bins em {
  padding-left: 9px;
}
.sb.hs {
  height: 16px;
  padding: 1px;
}
.hs .thumb {
  flex: none;
  width: 33px;
}
.hsub {
  display: flex;
  height: 62px;
  border-bottom: 2px solid #000;
}
.hsub ul {
  width: 76px;
  margin-right: 3px;
  padding: 3px;
  border-right-width: 4px;
}
.res {
  flex: 1;
  display: flex;
  flex-direction: column;
  padding: 2px 3px 0;
  border: solid #000;
  border-width: 1px 2px 0 1px;
}
.res span {
  text-align: center;
}
.res b {
  padding: 4px 0 0 3px;
}
.res input {
  height: 15px;
  background: #84b8b8;
  border: 2px solid;
  border-color: var(--dark) var(--light) var(--light) var(--dark);
}
.res input::-webkit-slider-thumb {
  appearance: none;
  width: 30px;
  height: 11px;
  border: 2px solid;
  border-color: #cdfaf8 #4c7f80 #4c7f80 #cdfaf8;
  background: linear-gradient(90deg, #9bdbdb 12px, #4c7f80 12px 13px, #cdfaf8 13px 14px, #9bdbdb 14px);
}
.sash {
  position: relative;
  height: 10px;
  padding-top: 4px;
  border-bottom: 2px solid var(--teal-dark);
}
.sash::before {
  content: '';
  display: block;
  height: 2px;
  background: linear-gradient(#2b7362 50%, #9cf0da 50%);
}
.sash i {
  position: absolute;
  right: 10px;
  top: 1px;
  width: 10px;
  height: 7px;
  background: var(--teal);
  border: 2px solid;
  border-color: #9cf0da #2b7362 #2b7362 #9cf0da;
}
.board {
  height: 163px;
  margin: 0 5px 0 4px;
  padding: 19px 0 0 120px;
  border: 1px solid #000;
  outline: 1px solid var(--teal-light);
}
.hfoot {
  display: flex;
  gap: 4px;
  height: 42px;
  margin: 2px 4px 2px 5px;
}
.hfoot .tag {
  height: 38px;
  margin-top: 1px;
  padding-top: 5px;
}
.hfoot .tag span {
  margin-bottom: 4px;
}
.measure {
  flex: 1;
  margin-left: -2px;
  padding-left: 2px;
  border: 1px solid #000;
  background: #9bdbdb;
  line-height: 40px;
}
.pic {
  width: 38px;
  height: 38px;
  margin-top: 2px;
  padding: 2px;
}
.hclose {
  padding: 2px;
  border-top: 1px solid #000;
  background: #9bdbdb;
}
.hclose button {
  width: 100%;
  height: 25px;
}

.viewer {
  top: 627px;
  left: 122px;
  width: 510px;
  padding: 0 6px 6px 7px;
  background: linear-gradient(180deg, #6fa048, #5a8a2e 60%, #b8d8d0 88%, #9bc6c4);
}
.viewer::before {
  content: '';
  position: absolute;
  left: 0;
  top: 28px;
  bottom: 0;
  width: 8px;
  background: linear-gradient(#a8c8c4, #7fa6a2 30%, #84aaa6 80%, #a8c8c4);
}
.viewer header {
  margin: 0 -6px 0 -7px;
  padding: 0 6px 0 8px;
  border-radius: 5px 5px 0 0;
  background:
    linear-gradient(#5e9430 8px, transparent 10px),
    linear-gradient(120deg, #8fc4b0 50px, #8098d0 100px, #1c34d8 130px 185px, #141a1a 195px 375px, #5e9430 385px);
}
.viewer .pane {
  position: relative;
  background: #9bdbdb;
}
.vtitle {
  padding: 2px;
  border-bottom: 2px solid #000;
}
.vtitle h2 {
  height: 23px;
  font: bold 15px/19px var(--serif);
  text-align: center;
}
.vmain {
  display: flex;
  background: var(--teal);
  border-bottom: 2px solid #000;
  font-weight: normal;
}
.vleft {
  display: flex;
  flex-direction: column;
  width: 171px;
  border-right: 2px solid #000;
}
.vtabs {
  display: flex;
  height: 30px;
  border: solid #000;
  border-width: 1px 0 1px;
}
.vtabs div {
  display: flex;
  padding: 2px 1px 2px 2px;
}
.vtabs button {
  width: 46px;
  font-style: italic;
}
.vtabs div:last-child button {
  width: 37px;
}
.vtabs strong {
  flex: 1;
  border: solid #000;
  border-width: 0 1px;
  background: #9bdbdb;
  font-style: italic;
  line-height: 29px;
  text-align: center;
}
.vlist,
.clist {
  --face: var(--teal);
  --light: var(--teal-light);
  --dark: var(--teal-dark);
  display: flex;
  gap: 4px;
}
.vlist {
  height: 196px;
  padding: 0 1px;
}
.vlist > .sb {
  margin-bottom: 20px;
}
.grow {
  flex: 1;
  display: flex;
  flex-direction: column;
  gap: 4px;
}
.grow ul {
  flex: 1;
  padding: 3px 2px;
}
.vlist li {
  height: 15px;
  margin: 0 2px 3px 0;
  line-height: 15px;
}
.vlist .sel,
.clist .sel {
  color: #6fd8bc;
}
.replace {
  flex: 1;
  padding: 1px 1px 1px 5px;
  border-top: 1px solid #000;
}
.replace .opt {
  height: 30px;
}
.vright {
  flex: 1;
}
.vcat {
  display: flex;
  height: 31px;
  padding: 2px 0 1px 1px;
}
.vcat button {
  width: 206px;
  font-style: italic;
  font-weight: bold;
}
.vcat span {
  flex: 1;
  padding-left: 1px;
  background: #9bdbdb;
  line-height: 28px;
}
.vcat .opt {
  width: 60px;
}
.vcat .opt select {
  padding-left: 3px;
}
.clist {
  height: 134px;
  padding: 0;
}
.clist .sb.v {
  margin-bottom: 19px;
}
.clist .sb.v .thumb {
  flex: none;
  height: 36px;
}
.clist ul {
  padding: 4px 2px 0;
}
.clist li {
  height: 15px;
  margin: 0 2px 3px 0;
  line-height: 15px;
  cursor: default;
}
.clist li:last-child {
  margin-bottom: 0;
}
.vnav {
  display: flex;
  gap: 3px;
  height: 26px;
  padding: 3px 1px 0;
}
.vnav button {
  flex: 1 0 auto;
  padding: 0 2px;
}
.vnav label {
  padding-top: 2px;
}
.vnav input {
  width: 60px;
  padding: 0 0 4px 5px;
}
.vopt {
  display: flex;
  height: 34px;
  padding-top: 2px;
}
.zoom {
  width: 124px;
  padding: 1px 1px 1px 5px;
  border: 1px solid #000;
  border-left: 0;
}
.zoom .opt,
.sv .opt {
  height: 28px;
}
.sv {
  display: flex;
  width: 97px;
  border: 1px solid #000;
  border-left: 0;
  background: #9bdbdb;
  line-height: 29px;
}
.sv div {
  flex: 1;
  margin-left: 1px;
  padding: 1px 2px 1px 6px;
  background: #18e818;
}
.opt.lime {
  --face: #18e818;
  --light: #90ff90;
  --dark: #1c8a3c;
}
.all {
  display: flex;
  gap: 3px;
  padding: 5px 0 0 5px;
}
.all input {
  width: 13px;
  height: 13px;
  margin-top: 2px;
  border: 1px solid;
  border-color: #9cf0da #2b7362 #2b7362 #9cf0da;
}
.vtags {
  display: flex;
  justify-content: flex-end;
  gap: 4px;
  padding: 2px 1px;
}
.vinfo {
  height: 21px;
  background: #53cfaf;
  border-bottom: 2px solid #000;
  font-weight: normal;
  line-height: 21px;
  text-align: center;
}
.verf {
  height: 20px;
  padding-left: 1px;
  background: #ffffcc;
  border-bottom: 1px solid #000;
  font-weight: normal;
  line-height: 20px;
}
.vfoot {
  display: flex;
  gap: 5px;
  padding: 3px 1px 2px;
}
.vclose {
  flex: 1;
  height: 29px;
  font-weight: normal;
}
.act {
  width: 29px;
  height: 29px;
  padding: 1px;
}
.act svg {
  width: 22px;
  height: 22px;
  margin: auto;
}
.act.on {
  outline: 2px solid #e01818;
  outline-offset: -3px;
}
</style>
